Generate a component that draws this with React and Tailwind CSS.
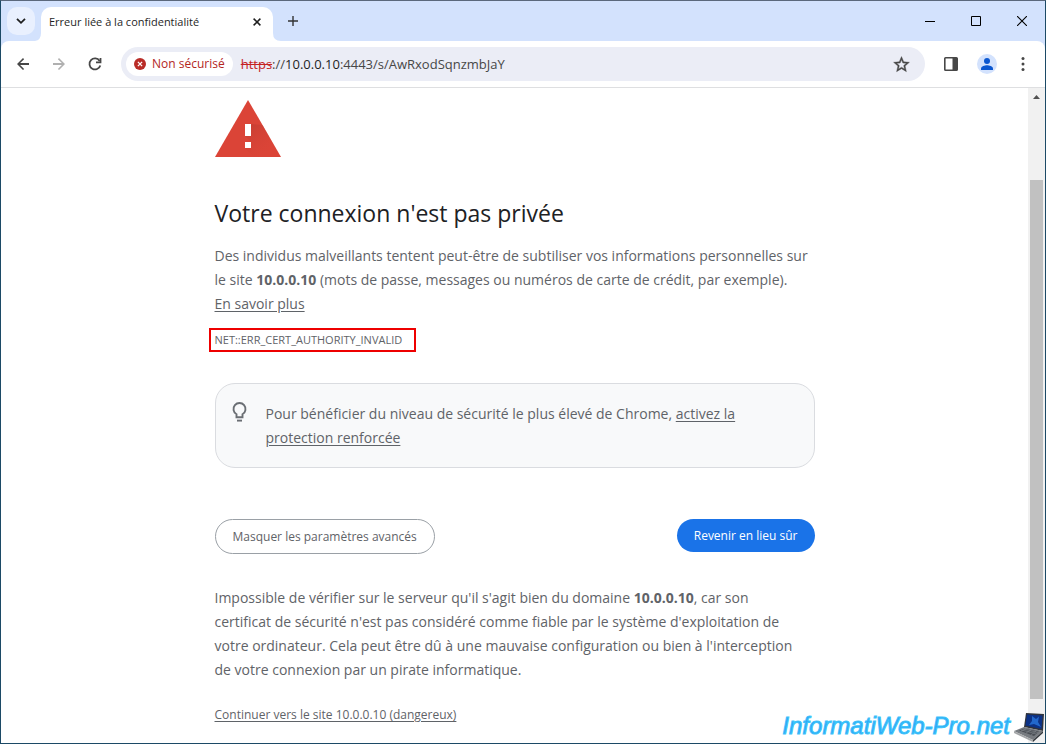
import React from "react";

const toolButton =
  "flex h-9 w-9 shrink-0 items-center justify-center rounded-full text-[#474747]";
const windowButton = "flex h-10 w-[46px] items-center justify-center text-black";

function TabStrip() {
  return (
    <header className="flex h-10 shrink-0 items-end bg-[#d3e2fd]">
      <button
        type="button"
        aria-label="Rechercher dans les onglets"
        className="mb-1.5 ml-1.5 flex h-7 w-7 items-center justify-center rounded-[10px] bg-[#e9f0fe]"
      >
        <svg width="10" height="8" viewBox="0 0 10 8" fill="none" stroke="#1f1f1f" strokeWidth="1.8">
          <path d="M1 1.8 5 5.8 9 1.8" />
        </svg>
      </button>
      <div className="flex h-[34px] items-end">
        <svg width="6" height="8" viewBox="0 0 6 8" fill="#fff">
          <path d="M6 0V8H0Q6 7 6 0Z" />
        </svg>
        <div className="flex h-full w-[232px] items-center justify-between rounded-t-[10px] bg-white pb-1 pl-2 pr-2">
          <span className="whitespace-nowrap text-[11px] leading-4 text-[#1f1f1f]">
            Erreur liée à la confidentialité
          </span>
          <button type="button" aria-label="Fermer l'onglet" className="flex h-4 w-4 items-center justify-center">
            <svg width="8" height="8" viewBox="0 0 8 8" fill="none" stroke="#1f1f1f" strokeWidth="1.5">
              <path d="M.6.6 7.4 7.4M7.4.6.6 7.4" />
            </svg>
          </button>
        </div>
        <svg width="8" height="8" viewBox="0 0 8 8" fill="#fff">
          <path d="M0 0V8H8Q0 8 0 0Z" />
        </svg>
      </div>
      <button type="button" aria-label="Nouvel onglet" className="mb-1.5 flex h-7 w-6 items-center justify-center">
        <svg width="10" height="10" viewBox="0 0 10 10" fill="none" stroke="#333" strokeWidth="1.4">
          <path d="M5 0V10M0 5H10" />
        </svg>
      </button>
      <div className="ml-auto flex">
        <button type="button" aria-label="Réduire" className={windowButton}>
          <svg width="10" height="10" viewBox="0 0 10 10">
            <path d="M0 5H10V6H0Z" />
          </svg>
        </button>
        <button type="button" aria-label="Agrandir" className={windowButton}>
          <svg width="10" height="10" viewBox="0 0 10 10" fill="none" stroke="#000">
            <path d="M.5.5H9.5V9.5H.5Z" />
          </svg>
        </button>
        <button type="button" aria-label="Fermer" className={windowButton}>
          <svg width="10" height="10" viewBox="0 0 10 10" fill="none" stroke="#000" strokeWidth="1.1">
            <path d="M0 0 10 10M10 0 0 10" />
          </svg>
        </button>
      </div>
    </header>
  );
}

function Toolbar() {
  return (
    <div className="shrink-0 bg-[#d3e2fd]">
      <nav className="flex h-[47px] items-center rounded-t-lg border-b border-[#dedfe1] bg-white px-1">
        <button type="button" aria-label="Retour" className={toolButton}>
          <svg width="18" height="18" viewBox="0 0 24 24" fill="currentColor">
            <path d="M20 10.8H8.2l5.3-5.3L12 4l-8 8 8 8 1.5-1.5-5.3-5.3H20z" />
          </svg>
        </button>
        <button type="button" aria-label="Avancer" className={toolButton}>
          <svg width="18" height="18" viewBox="0 0 24 24" fill="#b0b0b0">
            <path d="M4 10.8H15.8L10.5 5.5 12 4l8 8-8 8-1.500-1.500 5.300-5.300H4z" />
          </svg>
        </button>
        <button type="button" aria-label="Actualiser" className={toolButton}>
          <svg width="16" height="16" viewBox="0 0 16 16" fill="none" stroke="currentColor" strokeWidth="1.8">
            <path d="M13.300 9.400A5.500 5.500 0 1 1 12.600 4.900" />
            <path d="M13.500 2V6.300H9" />
          </svg>
        </button>
        <div className="mx-2 flex h-[34px] min-w-0 flex-1 items-center rounded-full bg-[#ebedf6] pl-[5px] pr-2.5">
          <button
            type="button"
            className="flex h-6 items-center gap-1.5 whitespace-nowrap rounded-full bg-white px-2 text-[12px] font-medium text-[#b3261e]"
          >
            <svg width="12" height="12" viewBox="0 0 12 12">
              <circle cx="6" cy="6" r="6" fill="#b92c27" />
              <path d="M3.900 3.900 8.100 8.100M8.100 3.900 3.900 8.100" stroke="#fff" strokeWidth="1.300" />
            </svg>
            Non sécurisé
          </button>
          <div className="ml-2 min-w-0 flex-1 whitespace-nowrap text-[13px] leading-5 text-[#474747]">
            <span className="text-[#c5221f] line-through">https</span>
            <span>://</span>
            <span className="text-[#1f1f1f]">10.0.0.10</span>
            <span>:4443/s/AwRxodSqnzmbJaY</span>
          </div>
          <button type="button" aria-label="Ajouter aux favoris" className="flex h-7 w-7 items-center justify-center text-[#474747]">
            <svg width="19" height="19" viewBox="0 0 24 24" fill="currentColor" stroke="currentColor" strokeWidth="0.500">
              <path d="m22 9.240-7.190-.62L12 2 9.190 8.630 2 9.240l5.460 4.730L5.820 21 12 17.270 18.180 21l-1.630-7.030L22 9.240zM12 15.400l-3.760 2.270 1-4.280-3.320-2.880 4.380-.38L12 6.100l1.710 4.040 4.380.38-3.320 2.880 1 4.280L12 15.400z" />
            </svg>
          </button>
        </div>
        <button type="button" aria-label="Panneau latéral" className={toolButton}>
          <svg width="14" height="14" viewBox="0 0 14 14">
            <rect x="0.800" y="0.800" width="12.400" height="12.400" rx="0.800" fill="none" stroke="#474747" strokeWidth="1.600" />
            <path d="M8.500 1H13V13H8.500Z" fill="#474747" />
          </svg>
        </button>
        <button type="button" aria-label="Profil" className={toolButton}>
          <svg width="20" height="20" viewBox="0 0 20 20">
            <circle cx="10" cy="10" r="10" fill="#d3e2fd" />
            <circle cx="10" cy="7" r="3" fill="#0b57d0" />
            <path d="M4 16V14.500C4 12.300 8 11.200 10 11.200S16 12.300 16 14.500V16Z" fill="#0b57d0" />
          </svg>
        </button>
        <button type="button" aria-label="Menu" className={toolButton}>
          <svg width="4" height="14" viewBox="0 0 4 14" fill="currentColor">
            <circle cx="2" cy="1.500" r="1.500" />
            <circle cx="2" cy="7" r="1.500" />
            <circle cx="2" cy="12.500" r="1.500" />
          </svg>
        </button>
      </nav>
    </div>
  );
}

function WarningIcon() {
  return (
    <svg width="66" height="57" viewBox="0 0 66 57" className="block">
      <defs>
        <linearGradient id="shade" x1="30" y1="24" x2="54" y2="54" gradientUnits="userSpaceOnUse">
          <stop offset="0" stopColor="#b93a2f" stopOpacity="0.700" />
          <stop offset="1" stopColor="#db4437" stopOpacity="0" />
        </linearGradient>
      </defs>
      <path d="M33 0 66 57H0Z" fill="#db4437" />
      <path d="M36 24 47.500 25 66 57H38L30 48H36V42L30 36Z" fill="url(#shade)" />
      <path d="M30 24H36V36H30ZM30 42H36V48H30Z" fill="#fff" />
    </svg>
  );
}

function Laptop() {
  return (
    <svg width="31" height="31" viewBox="0 0 31 31">
      <path d="M12 1 30 2 29 19 10 15Z" fill="#30343c" />
      <path d="M13 2.500 28.500 3.500 27.500 17 11.500 13.500Z" fill="#0c3286" />
      <path d="M18 4 22 7 25 4.500 24 10 27 15 20 12 15 13 18 9Z" fill="#2268cc" />
      <path d="M10 15 29 19 19 28 0 19Z" fill="#777b80" />
      <path d="M10 16.500 25 19.500 20 24 5 18.500Z" fill="#4b4f55" />
      <path d="M7 17.800 22.500 22M9 16.800 24 20.500M12 16.800 7 19M17 18 12 21M22 19 17 23" stroke="#8b9096" strokeWidth="0.500" />
      <path d="M0 19 19 28V30L0 21Z" fill="#a4a6a8" />
      <path d="M19 28 29 19V21L19 30Z" fill="#34383d" />
    </svg>
  );
}

function Interstitial() {
  return (
    <main className="min-w-0 flex-1 bg-white text-[#5f6368]">
      <div className="mx-auto max-w-[600px] pt-3 text-[14px] leading-6">
        <WarningIcon />
        <h1 className="mt-[41px] text-[23px] leading-[30px] text-[#202124]">
          Votre connexion n'est pas privée
        </h1>
        <p className="mt-4">
          Des individus malveillants tentent peut-être de subtiliser vos informations personnelles sur
          <br />
          le site <strong>10.0.0.10</strong> (mots de passe, messages ou numéros de carte de crédit, par
          exemple).
          <br />
          <a href="#savoir" className="underline underline-offset-2">En savoir plus</a>
        </p>
        <div className="-ml-1.5 mt-3 flex h-6 w-fit min-w-[207px] items-center border-2 border-[#ee0000] px-1 text-[11px]">
          NET::ERR_CERT_AUTHORITY_INVALID
        </div>
        <section className="mt-[31px] flex gap-[18px] rounded-[20px] border border-[#dadce0] bg-[#f8f9fa] px-4 pb-[17px] pt-[18px]">
          <svg width="16" height="20" viewBox="0 0 16 20" className="shrink-0" fill="none" stroke="#6a6e73" strokeWidth="1.900">
            <path d="M4.500 15.200V12.200A6 6 0 1 1 10.500 12.200V15.200Z" />
            <path d="M5 18.600H10" />
          </svg>
          <p>
            Pour bénéficier du niveau de sécurité le plus élevé de Chrome,{" "}
            <a href="#protection" className="underline underline-offset-2">
              activez la
              <br />
              protection renforcée
            </a>
          </p>
        </section>
        <div className="mt-[51px] flex items-start justify-between text-[12px] leading-[17px]">
          <button type="button" className="rounded-full border border-[#9aa0a6] px-[17px] py-2">
            Masquer les paramètres avancés
          </button>
          <button type="button" className="rounded-full bg-[#1a73e8] px-[17px] py-2 text-white">
            Revenir en lieu sûr
          </button>
        </div>
        <p className="mt-8">
          Impossible de vérifier sur le serveur qu'il s'agit bien du domaine <strong>10.0.0.10</strong>, car son
          <br />
          certificat de sécurité n'est pas considéré comme fiable par le système d'exploitation de
          <br />
          votre ordinateur. Cela peut être dû à une mauvaise configuration ou bien à l'interception
          <br />
          de votre connexion par un pirate informatique.
        </p>
        <a href="#continuer" className="mt-[21px] block w-fit text-[12px] underline underline-offset-2">
          Continuer vers le site 10.0.0.10 (dangereux)
        </a>
      </div>
    </main>
  );
}

export default function App() {
  return (
    <div className="relative flex min-h-screen flex-col border border-[#1c4a66] border-t-[#5b687c] bg-white font-['Open_Sans','Noto_Sans',sans-serif]">
      <TabStrip />
      <Toolbar />
      <div className="flex flex-1">
        <Interstitial />
        <div className="flex w-[17px] shrink-0 flex-col items-center bg-[#f1f1f1] pb-11 pt-[7px]">
          <svg width="7" height="4" viewBox="0 0 7 4" fill="#505050">
            <path d="M3.500 0 7 4H0Z" />
          </svg>
          <div className="mt-[81px] w-[13px] flex-1 bg-[#c1c1c1]" />
        </div>
      </div>
      <div className="absolute bottom-0 right-0 flex items-start gap-1">
        <span className="whitespace-nowrap font-['Liberation_Sans',Arial,sans-serif] text-[24px] italic leading-7 text-[#2ea3f7] [-webkit-text-stroke:1px_#3cc4fa]">
          InformatiWeb-Pro.net
        </span>
        <Laptop />
      </div>
    </div>
  );
}
